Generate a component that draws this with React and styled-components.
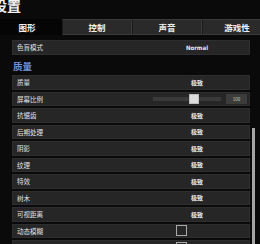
import React from "react";
import styled, { createGlobalStyle } from "styled-components";

const GlobalStyle = createGlobalStyle`
  html, body {
    margin: 0;
    padding: 0;
    background: #0a0a0a;
  }
  body {
    font-family: "Noto Sans CJK SC", "Noto Sans", sans-serif;
  }
`;

const Screen = styled.div`
  width: 260px;
  height: 244px;
  overflow: hidden;
  background: #0a0a0a;
  color: #e6e6e6;
`;

const Title = styled.h1`
  margin: 0 0 0 -7px;
  height: 19px;
  font-size: 14px;
  line-height: 10px;
  font-weight: 700;
  color: #f2f2f2;
`;

const TabBar = styled.div`
  display: flex;
  margin-left: -8px;
  height: 16px;
`;

const Tab = styled.div`
  width: 70px;
  flex-shrink: 0;
  box-sizing: border-box;
  display: flex;
  align-items: center;
  justify-content: center;
  font-size: 8.5px;
  font-weight: 700;
  color: #f0f0f0;
  background: ${(p) => (p.active ? "#050505" : "#2a2a2a")};
  border: 1px solid ${(p) => (p.active ? "#050505" : "#3a3a3a")};
  border-left-color: #1a1a1a;
`;

const Body = styled.div`
  display: flex;
  padding-top: 5px;
`;

const List = styled.div`
  margin-left: 12px;
  width: 238px;
  flex-shrink: 0;
`;

const Row = styled.div`
  height: 14.5px;
  margin-bottom: 2px;
  box-sizing: border-box;
  display: grid;
  grid-template-columns: 1fr 104px;
  align-items: center;
  background: #262626;
  border: 1px solid #2e2e2e;
`;

const Label = styled.span`
  padding-left: 4px;
  font-size: 6.5px;
  color: #e2e2e2;
  white-space: nowrap;
`;

const Value = styled.div`
  display: flex;
  align-items: center;
  justify-content: ${(p) => (p.start ? "flex-start" : "center")};
  padding-left: ${(p) => (p.start ? "8px" : "0")};
  font-size: 6px;
  font-weight: 700;
  color: #eaeaea;
  font-family: ${(p) => (p.latin ? '"DejaVu Sans Condensed", "Noto Sans", sans-serif' : "inherit")};
`;

const Heading = styled.div`
  height: 18.5px;
  display: flex;
  align-items: center;
  padding-left: 1px;
  font-size: 9.5px;
  font-weight: 700;
  color: #7092da;
`;

const Track = styled.div`
  position: relative;
  width: 68px;
  height: 4px;
  background: #3a3a3a;
`;

const Knob = styled.div`
  position: absolute;
  left: 36px;
  top: -3px;
  width: 10px;
  height: 10px;
  background: #dcdcdc;
  border: 1px solid #bcbcbc;
  box-sizing: border-box;
`;

const NumberBox = styled.div`
  margin-left: 5px;
  width: 21px;
  height: 10px;
  display: flex;
  align-items: center;
  justify-content: center;
  background: #3c3c3c;
  font-size: 4.5px;
  font-weight: 400;
  color: #c8c8c8;
`;

const Check = styled.div`
  width: 11px;
  height: 11px;
  box-sizing: border-box;
  border: 1px solid #a8a8a8;
  margin-right: 32px;
`;

const Scrollbar = styled.div`
  margin-left: 2px;
  width: 3px;
`;

const Thumb = styled.div`
  margin-top: 88px;
  height: 140px;
  background: #a4a4a4;
`;

const rows = [
  { id: "quality", label: "质量", value: "极致" },
  { id: "scale", label: "屏幕比例", type: "slider" },
  { id: "aa", label: "抗锯齿", value: "极致" },
  { id: "post", label: "后期处理", value: "极致" },
  { id: "shadow", label: "阴影", value: "极致" },
  { id: "texture", label: "纹理", value: "极致" },
  { id: "fx", label: "特效", value: "极致" },
  { id: "trees", label: "树木", value: "极致" },
  { id: "view", label: "可视距离", value: "极致" },
  { id: "blur", label: "动态模糊", type: "check" },
  { id: "next", label: "", type: "check" },
];

const renderValue = (row) => {
  if (row.type === "slider") {
    return (
      <Value start>
        <Track>
          <Knob />
        </Track>
        <NumberBox>100</NumberBox>
      </Value>
    );
  }
  if (row.type === "check") {
    return (
      <Value>
        <Check />
      </Value>
    );
  }
  return <Value>{row.value}</Value>;
};

const App = () => {
  const tabs = ["图形", "控制", "声音", "游戏性"];
  return (
    <Screen>
      <GlobalStyle />
      <Title>设置</Title>
      <TabBar>
        {tabs.map((t, i) => (
          <Tab key={t} active={i === 0}>
            {t}
          </Tab>
        ))}
      </TabBar>
      <Body>
        <List>
          <Row>
            <Label>色盲模式</Label>
            <Value latin>Normal</Value>
          </Row>
          <Heading>质量</Heading>
          {rows.map((r) => (
            <Row key={r.id}>
              <Label>{r.label}</Label>
              {renderValue(r)}
            </Row>
          ))}
        </List>
        <Scrollbar>
          <Thumb />
        </Scrollbar>
      </Body>
    </Screen>
  );
};

export default App;
